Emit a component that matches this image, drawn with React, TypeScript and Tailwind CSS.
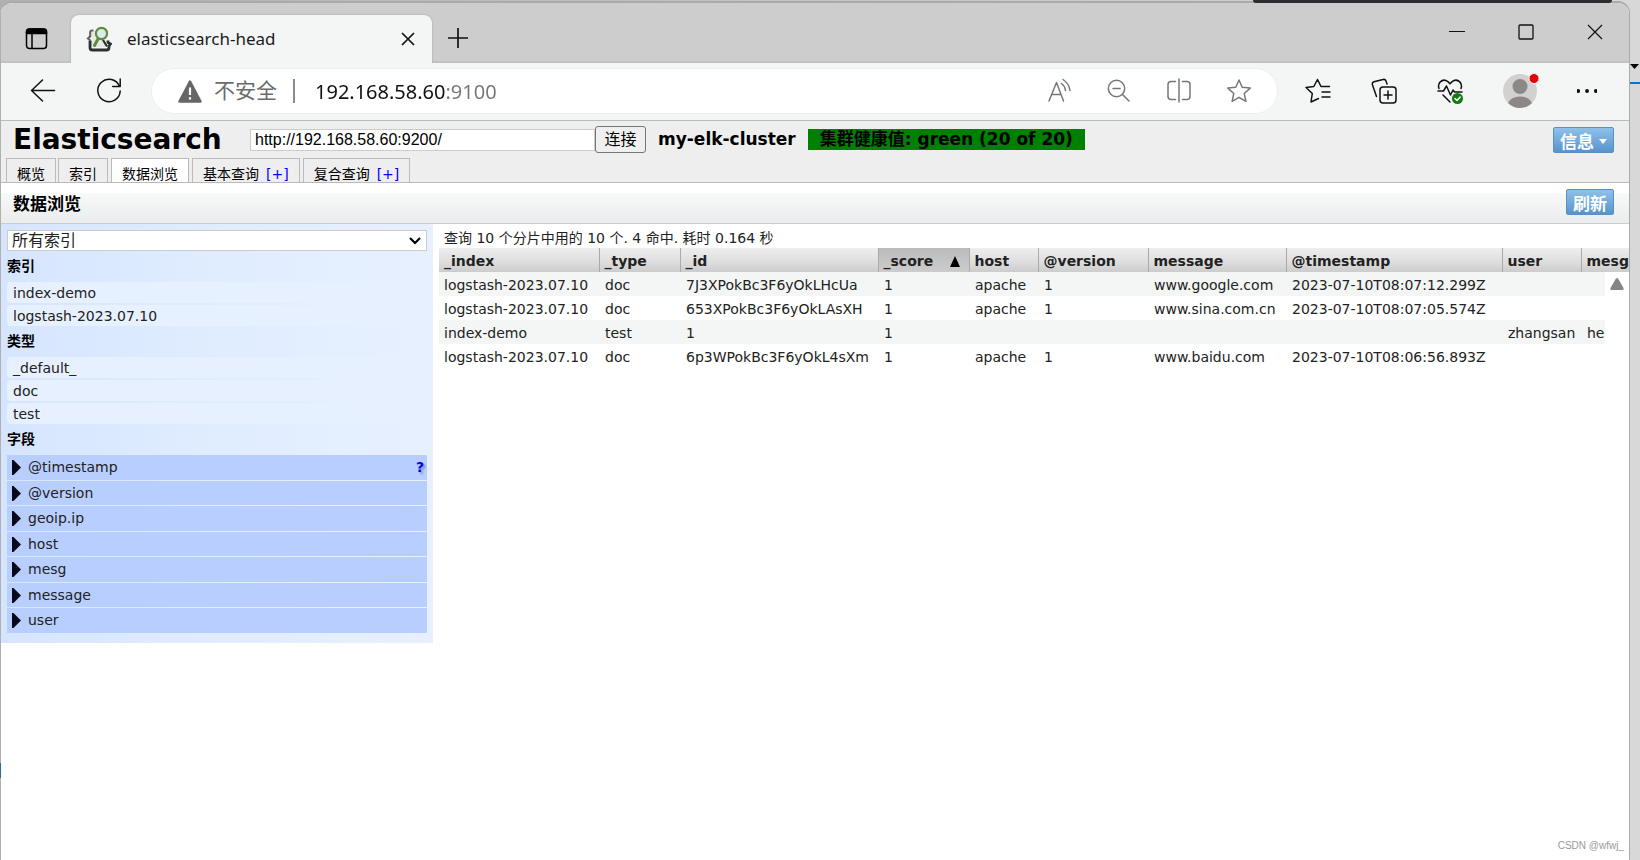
import type { ReactNode } from "react";

const ui = "font-['Noto_Sans','Noto_Sans_CJK_SC',sans-serif]";

const columns = [
  { name: "_index", width: "w-[160px]" },
  { name: "_type", width: "w-[81px]" },
  { name: "_id", width: "w-[198px]" },
  { name: "_score", width: "w-[91px]", sorted: true },
  { name: "host", width: "w-[69px]" },
  { name: "@version", width: "w-[110px]" },
  { name: "message", width: "w-[138px]" },
  { name: "@timestamp", width: "w-[216px]" },
  { name: "user", width: "w-[79px]" },
  { name: "mesg", width: "w-[120px]" },
];

const rows = [
  ["logstash-2023.07.10", "doc", "7J3XPokBc3F6yOkLHcUa", "1", "apache", "1", "www.google.com", "2023-07-10T08:07:12.299Z", "", ""],
  ["logstash-2023.07.10", "doc", "653XPokBc3F6yOkLAsXH", "1", "apache", "1", "www.sina.com.cn", "2023-07-10T08:07:05.574Z", "", ""],
  ["index-demo", "test", "1", "1", "", "", "", "", "zhangsan", "hello"],
  ["logstash-2023.07.10", "doc", "6p3WPokBc3F6yOkL4sXm", "1", "apache", "1", "www.baidu.com", "2023-07-10T08:06:56.893Z", "", ""],
];

const fields = ["@timestamp", "@version", "geoip.ip", "host", "mesg", "message", "user"];

function Icon({ size = 26, className = "", children }: { size?: number; className?: string; children: ReactNode }) {
  return (
    <svg
      width={size}
      height={size}
      viewBox="0 0 26 26"
      fill="none"
      stroke="currentColor"
      strokeWidth="1.5"
      strokeLinecap="round"
      strokeLinejoin="round"
      className={className}
      aria-hidden="true"
    >
      {children}
    </svg>
  );
}

function IconButton({ label, className = "", children }: { label: string; className?: string; children: ReactNode }) {
  return (
    <button type="button" aria-label={label} className={`flex shrink-0 items-center justify-center ${className}`}>
      {children}
    </button>
  );
}

function TitleBar() {
  return (
    <div className="flex h-[60px] shrink-0 items-end border-b-2 border-[#c3c2c2] bg-[#cdcdcd]">
      <IconButton label="标签页操作" className="h-[44px] w-[70px]">
        <Icon>
          <rect x="3.500" y="3" width="20" height="19.500" rx="3" />
          <path d="M3.500 7.500V6a3 3 0 0 1 3-3h14a3 3 0 0 1 3 3v1.500z" fill="currentColor" />
          <path d="M9 8v14" />
        </Icon>
      </IconButton>
      <div className="-mb-[2px] flex h-[48px] w-[361px] items-center rounded-t-lg bg-[#f4f6f5] pr-[14px] pl-[15px] shadow-[0_0_2px_#999]">
        <svg width="26" height="26" viewBox="0 0 26 26" fill="none" aria-hidden="true">
          <path d="M6 5h12v12l2.500 4H6z" fill="#e6ebe7" />
          <path d="M7.500 4.500H6q-1.800 0-1.800 2v3.800L2 12.500l2.200 2v6" stroke="#666" strokeWidth="2.200" />
          <path d="M4 15v6.500q0 2.500 2.500 2.500h14q2.500 0 2.500-2.500v-1.500l1.500-2-2.500-1.500v-2" stroke="#2c332e" strokeWidth="2.800" />
          <path d="m17 14 4 6.500" stroke="#2c332e" strokeWidth="2.200" />
          <circle cx="15.5" cy="7.5" r="5.600" fill="#d9eaf4" stroke="#5d8c3a" strokeWidth="2.200" />
          <path d="m12 13-3.500 6.500" stroke="#5d8c3a" strokeWidth="3" strokeLinecap="round" />
        </svg>
        <span className={`ml-[15px] grow text-[17px] text-[#1b1b1b] ${ui}`}>elasticsearch-head</span>
        <IconButton label="关闭标签页" className="size-[20px]">
          <svg width="14" height="14" viewBox="0 0 14 14" stroke="#111" strokeWidth="1.700" aria-hidden="true">
            <path d="m1 1 12 12M13 1 1 13" />
          </svg>
        </IconButton>
      </div>
      <IconButton label="新建标签页" className="h-[46px] w-[52px]">
        <svg width="22" height="22" viewBox="0 0 22 22" stroke="#111" strokeWidth="1.700" aria-hidden="true">
          <path d="M11 1v20M1 11h20" />
        </svg>
      </IconButton>
      <div className="ml-auto flex h-full items-center">
        <IconButton label="最小化" className="h-full w-[69px]">
          <svg width="16" height="16" viewBox="0 0 16 16" stroke="#111" strokeWidth="1.200" aria-hidden="true">
            <path d="M0 7.500h16" />
          </svg>
        </IconButton>
        <IconButton label="最大化" className="h-full w-[69px]">
          <svg width="16" height="16" viewBox="0 0 16 16" fill="none" stroke="#111" strokeWidth="1.300" aria-hidden="true">
            <rect x="1" y="1" width="14" height="14" rx="1" />
          </svg>
        </IconButton>
        <IconButton label="关闭" className="h-full w-[69px]">
          <svg width="16" height="16" viewBox="0 0 16 16" stroke="#111" strokeWidth="1.200" aria-hidden="true">
            <path d="m1 1 14 14M15 1 1 15" />
          </svg>
        </IconButton>
      </div>
    </div>
  );
}

const star = "m13 2 3.200 7.300 8 .8-6 5.400 1.700 7.900-6.900-4.100-6.900 4.100 1.700-7.900-6-5.400 8-.8z";

function Toolbar() {
  return (
    <div className="flex h-[57px] shrink-0 items-center bg-[#f4f6f5] pb-px text-[#111]">
      <IconButton label="后退" className="ml-[8px] w-[68px]">
        <Icon>
          <path d="M24.500 12.500H1.500M12.500 2 1.500 12.500l11 10.500" />
        </Icon>
      </IconButton>
      <IconButton label="刷新" className="w-[64px]">
        <Icon>
          <path d="M23.500 8.500A11.200 11.200 0 1 0 24.200 13M24.200 1v7.500h-7.500" />
        </Icon>
      </IconButton>
      <div className="ml-[10px] flex h-[46px] min-w-0 grow items-center rounded-full border border-[#eceeed] bg-white pr-[25px] pl-[26px]">
        <svg width="24" height="23" viewBox="0 0 24 23" className="shrink-0" aria-hidden="true">
          <path d="M12 1.500 22.500 21.500h-21z" fill="#666" stroke="#666" strokeWidth="2.500" strokeLinejoin="round" />
          <path d="M12 7.500v7.500M12 17.200v2.300" stroke="#fff" strokeWidth="2.200" />
        </svg>
        <span className={`ml-[12px] shrink-0 text-[21px] text-[#6b6b6b] ${ui}`}>不安全</span>
        <span className="ml-[16px] h-[24px] w-[2px] shrink-0 bg-[#8a8a8a]" />
        <input
          aria-label="地址"
          defaultValue="192.168.58.60:9100"
          className={`ml-[20px] h-[40px] min-w-0 grow bg-[linear-gradient(to_right,#111_131px,#777_131px)] bg-clip-text text-[20px] text-transparent caret-black outline-none ${ui}`}
        />
        <div className="flex items-center gap-[34px] text-[#777]">
          <IconButton label="大声朗读">
            <Icon>
              <path d="m3 23 7.500-18.500L17.500 23M5.800 16.500h9M15.500 5.500q3.500 2.500 4 7M17 1.500q6 4 7 11" />
            </Icon>
          </IconButton>
          <IconButton label="缩小">
            <Icon>
              <circle cx="10.5" cy="10.5" r="8.200" />
              <path d="m16.500 16.500 6.500 6.500M7 10.500h7" />
            </Icon>
          </IconButton>
          <IconButton label="分屏">
            <Icon>
              <path d="M9.500 3.500H5a3 3 0 0 0-3 3v12a3 3 0 0 0 3 3h4.500M16.500 3.500H21a3 3 0 0 1 3 3v12a3 3 0 0 1-3 3h-4.500M13 1v23" />
            </Icon>
          </IconButton>
          <IconButton label="收藏">
            <Icon>
              <path d={star} />
            </Icon>
          </IconButton>
        </div>
      </div>
      <div className="ml-[27px] flex shrink-0 items-center gap-[40px] pr-[32px]">
        <IconButton label="收藏夹">
          <Icon>
            <path d="M13.500 20.500 6 24l1.300-8.500L1 9.500l7.800-1L12.500 1.500l3.500 7h8.500M17 14h8M17 19h8" />
          </Icon>
        </IconButton>
        <IconButton label="集锦">
          <Icon>
            <rect x="9" y="9" width="16" height="16" rx="3" />
            <path d="M17 13v8M13 17h8M5.500 18.500 1.500 7q-.8-2.500 1.500-3.300L12 1.500q2.200-.6 3 1.500l1 3" />
          </Icon>
        </IconButton>
        <IconButton label="浏览器概要">
          <Icon>
            <path d="M2 10.500C0 5 5 1 9 2.500q2.500 1 4 3.300 1.500-2.300 4-3.300c4-1.500 9 2.500 7 8M1 13h5.500l3-5 4 9 2.500-5 1.500 2H25M6 17l7 7" />
            <circle cx="20.500" cy="20.500" r="5.500" fill="#107c10" stroke="none" />
            <path d="m18 20.500 2 2 3.200-3.500" stroke="#fff" />
          </Icon>
        </IconButton>
        <IconButton label="个人资料">
          <svg width="34" height="34" viewBox="0 0 34 34" aria-hidden="true" className="overflow-visible">
            <circle cx="17" cy="17" r="17" fill="#d2d1cf" />
            <circle cx="17" cy="12.500" r="7.500" fill="#8b8886" />
            <path d="M5 29a12.500 9 0 0 1 24 0 17 17 0 0 1-24 0" fill="#8b8886" />
            <circle cx="31" cy="4.500" r="5" fill="#e80000" stroke="#f4f6f5" />
          </svg>
        </IconButton>
        <IconButton label="设置及其他">
          <Icon size={20}>
            <path d="M1.500 13h.1M13 13h.1M24.500 13h.1" strokeWidth="5" />
          </Icon>
        </IconButton>
      </div>
    </div>
  );
}

const blueButton =
  "flex h-[26px] items-center rounded-[2px] border border-[#5a8fc4] bg-linear-to-b from-[#8fc1ea] to-[#5794cb] pt-[4px] text-[17px] leading-[20px] font-bold text-white";

function Header() {
  const tab = "flex h-[24px] items-end border border-b-0 border-[#bbb] px-[10px] text-[14px] leading-[16px] whitespace-nowrap";
  return (
    <header className="shrink-0 border-y border-[#bbb] bg-[#eee]">
      <div className="flex h-[37px] items-center pr-[15px] pl-[12px]">
        <h1 className="w-[237px] shrink-0 text-[28px] font-bold">Elasticsearch</h1>
        <input
          aria-label="节点地址"
          defaultValue="http://192.168.58.60:9200/"
          className="h-[22px] w-[345px] border border-[#ccc] bg-white px-[4px] font-['Liberation_Sans',sans-serif] text-[16px]"
        />
        <button type="button" className="h-[27px] w-[51px] rounded-[3px] border border-[#767676] bg-[#efefef] text-[16px] leading-[24px]">
          连接
        </button>
        <span className="ml-[12px] text-[17px] font-bold">my-elk-cluster</span>
        <span className="ml-[12px] h-[21px] bg-[#008000] px-[12px] text-[17px] leading-[21px] font-bold whitespace-nowrap">
          集群健康值: green (20 of 20)
        </span>
        <button type="button" className={`ml-auto gap-[5px] px-[6px] ${blueButton}`}>
          信息
          <svg width="8" height="5" viewBox="0 0 8 5" fill="#fff" aria-hidden="true">
            <path d="M0 0h8L4 5z" />
          </svg>
        </button>
      </div>
      <nav className="flex pl-[5px]">
        <a href="#overview" className={tab}>概览</a>
        <a href="#indices" className={`ml-[2px] ${tab}`}>索引</a>
        <a href="#browser" className={`-mb-px ml-[3px] bg-white ${tab}`}>数据浏览</a>
        <a href="#query" className={`ml-[3px] gap-[7px] ${tab}`}>
          基本查询 <span className="text-[#00f]">[+]</span>
        </a>
        <a href="#anyrequest" className={`ml-[3px] gap-[7px] ${tab}`}>
          复合查询 <span className="text-[#00f]">[+]</span>
        </a>
      </nav>
    </header>
  );
}

function Choice({ children }: { children: ReactNode }) {
  return (
    <li>
      <button type="button" className="flex h-[21px] w-full items-center rounded-[4px] bg-[#e7f0ff] pt-[2px] pl-[6px] text-left">
        {children}
      </button>
    </li>
  );
}

function Sidebar() {
  const heading = "flex h-[31px] items-center font-bold text-black";
  return (
    <aside className="w-[432px] shrink-0 bg-linear-to-r from-[#d6e5ff] via-[#e0edff] to-[#e7f0ff] px-[6px] pt-[6px] pb-[10px] text-[14px] text-[#222]">
      <div className="flex h-[21px] items-center border border-[#ccc] bg-white">
        <select aria-label="选择索引" className="h-full w-full appearance-none pl-[4px] text-[16px] leading-[19px]">
          <option>所有索引</option>
        </select>
        <svg width="12" height="8" viewBox="0 0 12 8" fill="none" stroke="#000" strokeWidth="2.200" className="mr-[5px] shrink-0" aria-hidden="true">
          <path d="m1 1 5 5 5-5" />
        </svg>
      </div>
      <h2 className={heading}>索引</h2>
      <ul className="grid gap-[2px]">
        <Choice>index-demo</Choice>
        <Choice>logstash-2023.07.10</Choice>
      </ul>
      <h2 className={heading}>类型</h2>
      <ul className="grid gap-[2px]">
        <Choice>_default_</Choice>
        <Choice>doc</Choice>
        <Choice>test</Choice>
      </ul>
      <h2 className={heading}>字段</h2>
      <ul className="grid gap-px">
        {fields.map((field) => (
          <li key={field} className="flex items-center bg-[#b8ceff] pr-[3px] pl-[5px] odd:h-[25px] even:h-[24px]">
            <svg width="9" height="15" viewBox="0 0 9 15" fill="#080818" className="shrink-0" aria-hidden="true">
              <path d="M0 0h1.500L9 7.500 1.500 15H0z" />
            </svg>
            <button type="button" className="ml-[7px] grow text-left">{field}</button>
            {field === "@timestamp" && (
              <a href="#help" className="font-bold text-[#00f] [text-shadow:2px_2px_2px_#8a94b8]">?</a>
            )}
          </li>
        ))}
      </ul>
    </aside>
  );
}

function Results() {
  return (
    <section className="relative min-w-0 grow overflow-hidden pl-[6px] text-[14px] text-[#222]">
      <p className="h-[24px] pl-[5px] leading-[28px]">查询 10 个分片中用的 10 个. 4 命中. 耗时 0.164 秒</p>
      <table className="w-[1262px] table-fixed border-collapse whitespace-nowrap">
        <thead>
          <tr className="h-[24px]">
            {columns.map((column) => (
              <th
                key={column.name}
                className={`border-r border-[#aaa] p-0 pt-[2px] pl-[5px] text-left ${column.width} ${
                  column.sorted
                    ? "bg-linear-to-b from-[#bbb] to-[#ccc]"
                    : "bg-linear-to-b from-[#eee] from-0% via-[#ddd] via-60% to-[#ccc]"
                }`}
              >
                <span className="flex items-center justify-between pr-[9px]">
                  {column.name}
                  {column.sorted && (
                    <svg width="10" height="11" viewBox="0 0 10 11" fill="#000" aria-hidden="true">
                      <path d="m5 0 5 11H0z" />
                    </svg>
                  )}
                </span>
              </th>
            ))}
          </tr>
        </thead>
        <tbody>
          {rows.map((row, index) => (
            <tr key={index} className="h-[24px] odd:bg-[#f4f6f5]">
              {row.map((value, cell) => (
                <td key={cell} className="p-0 pt-[2px] pl-[6px] first:pl-[5px]">{value}</td>
              ))}
            </tr>
          ))}
        </tbody>
      </table>
      <div className="absolute top-[48px] right-0 bottom-0 w-[24px] bg-white pt-[6px] pl-[5px]">
        <svg width="14" height="12" viewBox="0 0 14 12" fill="#858585" aria-hidden="true">
          <path d="M7 0q.8 0 1.200.8L13.500 10q.6 2-1 2H1.500q-1.600 0-1-2L5.800.8Q6.200 0 7 0" />
        </svg>
      </div>
    </section>
  );
}

export default function App() {
  return (
    <div className="relative flex h-screen bg-linear-to-r from-[#b0b0b0] to-[#d8d8d8] pt-px pr-[10px] pl-px font-['DejaVu_Sans','Noto_Sans_CJK_SC',sans-serif] text-black">
      <div className="flex min-w-0 grow flex-col overflow-hidden rounded-t-[12px] border-t-2 border-r border-[#aaa] bg-white">
        <TitleBar />
        <Toolbar />
        <Header />
        <div className="mt-[10px] flex h-[31px] shrink-0 items-start justify-between border-b border-[#ccc] bg-linear-to-b from-[#f8f9f9] to-[#eaeded] pr-[15px] pl-[12px]">
          <h2 className="text-[17px] leading-[23px] font-bold">数据浏览</h2>
          <button type="button" className={`-mt-[4px] px-[6px] ${blueButton}`}>刷新</button>
        </div>
        <main className="flex grow items-start">
          <Sidebar />
          <Results />
        </main>
      </div>
      <span className="absolute top-0 right-[28px] h-[3px] w-[359px] rounded-b-[3px] bg-[#2b2d30]" />
      <span className="absolute top-[82px] right-0 h-[2px] w-[10px] bg-[#0a74c8]" />
      <svg width="10" height="5" viewBox="0 0 10 5" className="absolute top-[64px] right-px" aria-hidden="true">
        <path d="M1 0h9L5.500 5z" fill="#000" />
      </svg>
      <span className="absolute top-[763px] left-0 h-[15px] w-px bg-[#2f6a96]" />
      <span className="absolute right-[16px] bottom-[7px] font-['Liberation_Sans',sans-serif] text-[10px] text-[#999]">CSDN @wfwj_</span>
    </div>
  );
}
